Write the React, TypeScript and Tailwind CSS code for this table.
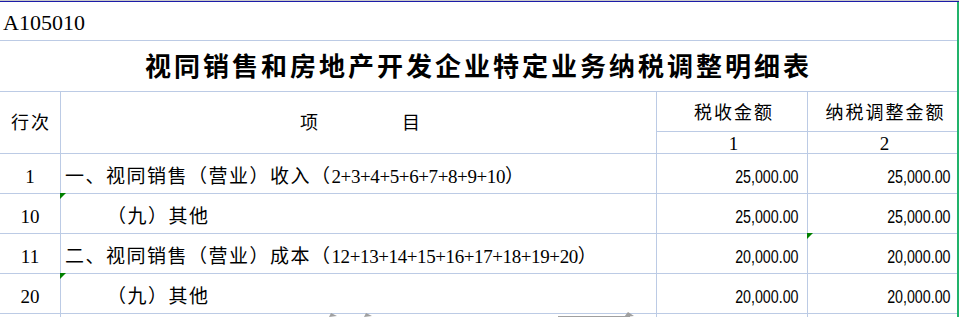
import React from 'react';

const serif = "font-['Liberation_Serif','Noto_Sans_CJK_SC',serif]";

const Corner = () => (
  <span className="absolute -left-px -top-px w-0 h-0 border-t-[6px] border-t-[#008000] border-r-[6px] border-r-transparent" />
);

// Excel shows amounts in a tall, narrow sans face
const Amount = ({ value }: { value: string }) => (
  <span className="inline-block origin-right scale-x-[0.75] font-['Liberation_Sans',sans-serif] text-[19px] leading-none">
    {value}
  </span>
);

interface Row {
  no: string;
  label: string;
  formula?: string;
  indent?: boolean;
  tax: string;
  adjust: string;
  noteItem?: boolean;
  noteAdjust?: boolean;
}

const rows: Row[] = [
  { no: '1', label: '一、视同销售（营业）收入（', formula: '2+3+4+5+6+7+8+9+10', tax: '25,000.00', adjust: '25,000.00' },
  { no: '10', label: '（九）其他', indent: true, tax: '25,000.00', adjust: '25,000.00', noteItem: true },
  { no: '11', label: '二、视同销售（营业）成本（', formula: '12+13+14+15+16+17+18+19+20', tax: '20,000.00', adjust: '20,000.00', noteAdjust: true },
  { no: '20', label: '（九）其他', indent: true, tax: '20,000.00', adjust: '20,000.00', noteItem: true },
];

export default function App() {
  return (
    <div className={`w-[959px] h-[317px] overflow-hidden bg-white text-black ${serif}`}>
      <div className="h-px bg-[#c9c9c9]" />
      <div className="h-px bg-[#1c1ca8]" />
      <div className="flex">
        <div className="grid grid-cols-[60px_595px_150px_149px] grid-rows-[38px_50px_39px_21px_39px_39px_39px_39px_3px] gap-px bg-[#bccbe5] w-[957px]">
          {/* form code */}
          <div className="col-span-4 bg-white flex items-center pl-[3px] pt-[3px] text-[22px] leading-none">
            A105010
          </div>

          {/* title */}
          <div className="col-span-4 bg-white flex items-center justify-center pt-[4px] text-[26px] font-bold tracking-[3px] leading-none">
            视同销售和房地产开发企业特定业务纳税调整明细表
          </div>

          {/* header */}
          <div className="row-span-2 bg-white flex items-center justify-center pl-[2px] text-[18px] tracking-[2px] leading-none">
            行次
          </div>
          <div className="row-span-2 bg-white flex items-center justify-center gap-[84px] pl-[3px] text-[18px] leading-none">
            <span>项</span>
            <span>目</span>
          </div>
          <div className="bg-white flex items-center justify-center pl-[4px] pt-[2px] text-[18px] tracking-[2px] leading-none">
            税收金额
          </div>
          <div className="bg-white flex items-center justify-center pl-[6px] pt-[2px] text-[18px] tracking-[2px] leading-none">
            纳税调整金额
          </div>
          <div className="bg-white flex items-center justify-center pl-[3px] pt-[1px] text-[19px] leading-none">1</div>
          <div className="bg-white flex items-center justify-center pl-[4px] pt-[1px] text-[19px] leading-none">2</div>

          {/* data rows */}
          {rows.map((r) => (
            <React.Fragment key={r.no}>
              <div className="bg-white flex items-center justify-center pt-[5px] text-[19px] leading-none">{r.no}</div>
              <div className={`relative bg-white flex items-center pt-[5px] text-[19px] tracking-[1.5px] leading-none whitespace-nowrap ${r.indent ? 'pl-[46px]' : 'pl-[4px]'}`}>
                {r.noteItem && <Corner />}
                <span>{r.label}</span>
                {r.formula && (
                  <>
                    <span className="tracking-[-0.4px]">{r.formula}</span>
                    <span>）</span>
                  </>
                )}
              </div>
              <div className="bg-white flex items-center justify-end pr-[8px] pt-[5px]">
                <Amount value={r.tax} />
              </div>
              <div className="relative bg-white flex items-center justify-end pr-[6px] pt-[5px]">
                {r.noteAdjust && <Corner />}
                <Amount value={r.adjust} />
              </div>
            </React.Fragment>
          ))}

          {/* partially visible next row */}
          <div className="bg-white" />
          <div className="bg-white relative overflow-visible">
            <svg className="absolute left-0 -top-[2px]" width="595" height="6" viewBox="0 0 595 6">
              <polygon points="270,1 276,4 268,5" fill="#a0a0a0" />
              <polygon points="305,1 311,4 303,5" fill="#a0a0a0" />
              <polygon points="567,0 573,4 563,5" fill="#a0a0a0" />
              <rect x="497" y="4" width="72" height="1" fill="#a0a0a0" />
            </svg>
          </div>
          <div className="bg-white" />
          <div className="bg-white" />
        </div>
        <div className="w-[2px] bg-[#21b36b]" />
      </div>
    </div>
  );
}
